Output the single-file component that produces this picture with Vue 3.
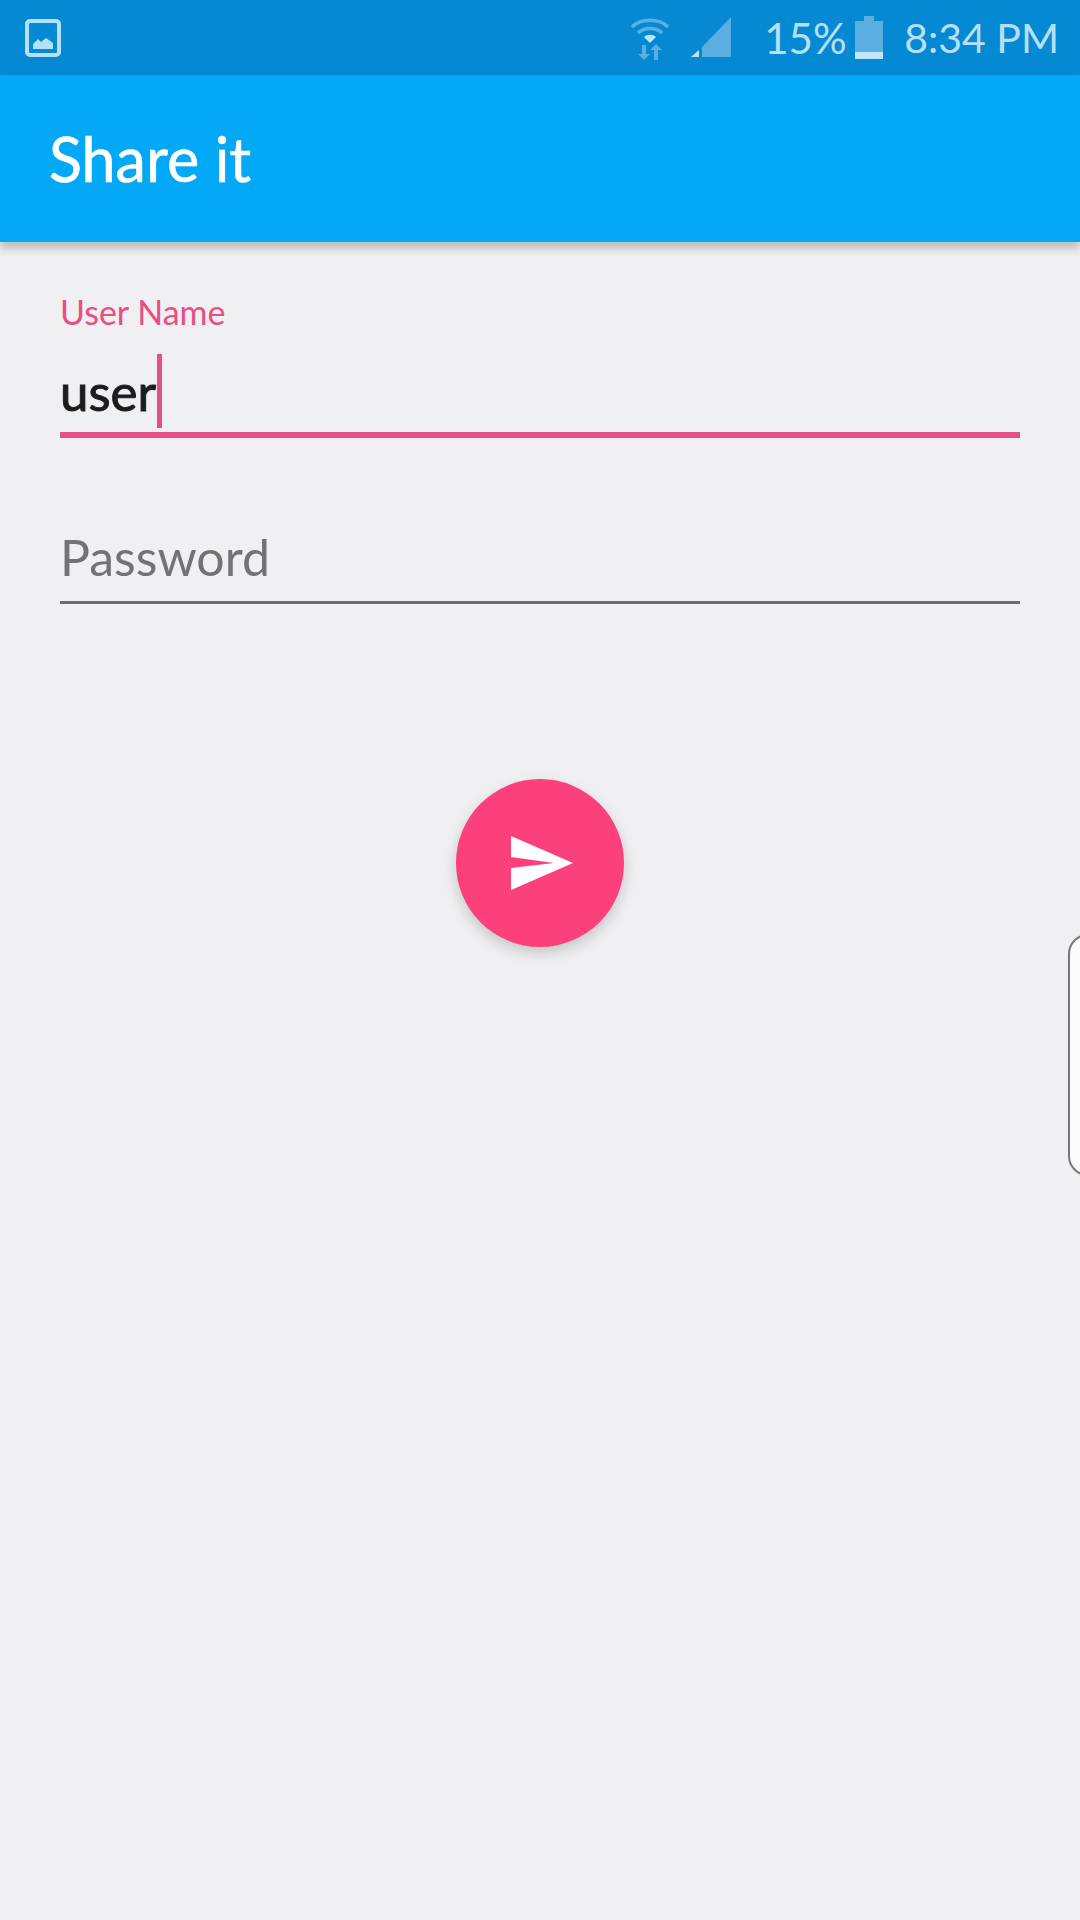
<script setup>
import { ref } from 'vue'

const username = ref('user')
</script>

<template>
  <div class="screen">
    <div class="status-bar">
      <svg class="pic-icon" width="36" height="38" viewBox="0 0 36 38">
        <rect x="2" y="2" width="32" height="34" rx="3" fill="none" stroke="#b5e0fa" stroke-width="4" />
        <path d="M8 30V25L13 20L16 23L21 19L28 24V30Z" fill="#b5e0fa" />
      </svg>
      <div class="status-right">
        <svg class="wifi" width="40" height="44" viewBox="0 0 40 44">
          <g fill="none" stroke="#5aaee2" stroke-width="3.5">
            <path d="M2 11C11 2 29 2 38 11" />
            <path d="M8 17C14 11 26 11 32 17" />
          </g>
          <path d="M14 21C17 18 23 18 26 21L20 27Z" fill="#c0e4fb" />
          <path d="M12 29V38H8L14 44L20 38H16V29Z" fill="#5aaee2" />
          <path d="M24 44V34H20L26 28L32 34H28V44Z" fill="#5aaee2" />
        </svg>
        <svg class="signal" width="42" height="41" viewBox="0 0 42 41">
          <path d="M41 0V40H12V30Z" fill="#5aaee2" />
          <path d="M1 40L9 33V40Z" fill="#c0e4fb" />
        </svg>
        <span class="pct">15%</span>
        <svg class="battery" width="28" height="43" viewBox="0 0 28 43">
          <path d="M9 0H19V5H28V43H0V5H9Z" fill="#5aaee2" />
          <rect y="36" width="28" height="7" fill="#c0e4fb" />
        </svg>
        <span class="clock">8:34 PM</span>
      </div>
    </div>

    <header class="app-bar">Share it</header>

    <main class="content">
      <div class="field active">
        <label class="field-label">User Name</label>
        <div class="field-value">{{ username }}<i class="caret"></i></div>
      </div>
      <div class="field">
        <div class="field-placeholder">Password</div>
      </div>

      <div class="fab-wrap">
        <button class="fab">
          <svg width="64" height="56" viewBox="0 0 64 56">
            <path d="M1 1L63 28L1 55V33L44 28L1 22Z" fill="#fff" />
          </svg>
        </button>
      </div>
    </main>

    <div class="edge-handle"></div>
  </div>
</template>

<style>
html, body {
  margin: 0;
  background: #f0f0f2;
}
</style>

<style scoped>
.screen {
  position: relative;
  width: 1080px;
  height: 1920px;
  overflow: hidden;
  background: #f0f0f2;
  font-family: "Lato", "Open Sans", sans-serif;
}

.status-bar {
  height: 75px;
  box-sizing: border-box;
  padding: 0 21px 0 25px;
  display: flex;
  align-items: center;
  justify-content: space-between;
  background: #0689d3;
  color: #b5e0fa;
}

.status-right {
  display: flex;
  align-items: center;
}

.wifi {
  margin-right: 20px;
}

.signal {
  margin-right: 32px;
}

.pct {
  font-size: 42px;
  width: 91px;
}

.battery {
  margin-right: 21px;
}

.clock {
  font-size: 41px;
  white-space: nowrap;
}

.app-bar {
  height: 167px;
  box-sizing: border-box;
  padding-left: 49px;
  display: flex;
  align-items: center;
  background: #03a8f6;
  color: #fff;
  font-size: 61px;
  -webkit-text-stroke: 0.6px #fff;
  box-shadow: 0 7px 8px rgba(0, 0, 0, 0.2);
}

.content {
  padding: 50px 60px 0;
}

.field {
  border-bottom: 3px solid #6e6e72;
}

.field.active {
  height: 146px;
  box-sizing: border-box;
  border-bottom: 6px solid #e35085;
  margin-bottom: 89px;
}

.field-label {
  display: block;
  height: 39px;
  font-size: 34px;
  line-height: 39px;
  color: #ea4d84;
}

.field-value {
  margin-top: 23px;
  height: 74px;
  display: flex;
  align-items: center;
  font-size: 51px;
  color: #1c1c1e;
  -webkit-text-stroke: 1px #1c1c1e;
}

.caret {
  width: 5px;
  height: 74px;
  margin-left: 1px;
  background: #e35085;
}

.field-placeholder {
  height: 60px;
  padding-bottom: 14px;
  font-size: 50px;
  line-height: 60px;
  color: #737376;
}

.fab-wrap {
  margin-top: 175px;
  display: flex;
  justify-content: center;
}

.fab {
  width: 168px;
  height: 168px;
  padding: 0 0 0 4px;
  border: none;
  border-radius: 50%;
  display: flex;
  align-items: center;
  justify-content: center;
  background: #fc407c;
  box-shadow: 0 6px 14px rgba(0, 0, 0, 0.18);
}

.edge-handle {
  position: absolute;
  top: 934px;
  left: 1068px;
  width: 40px;
  height: 242px;
  box-sizing: border-box;
  border: 2px solid #77777a;
  border-radius: 22px;
  background: #fbfbfc;
}
</style>
